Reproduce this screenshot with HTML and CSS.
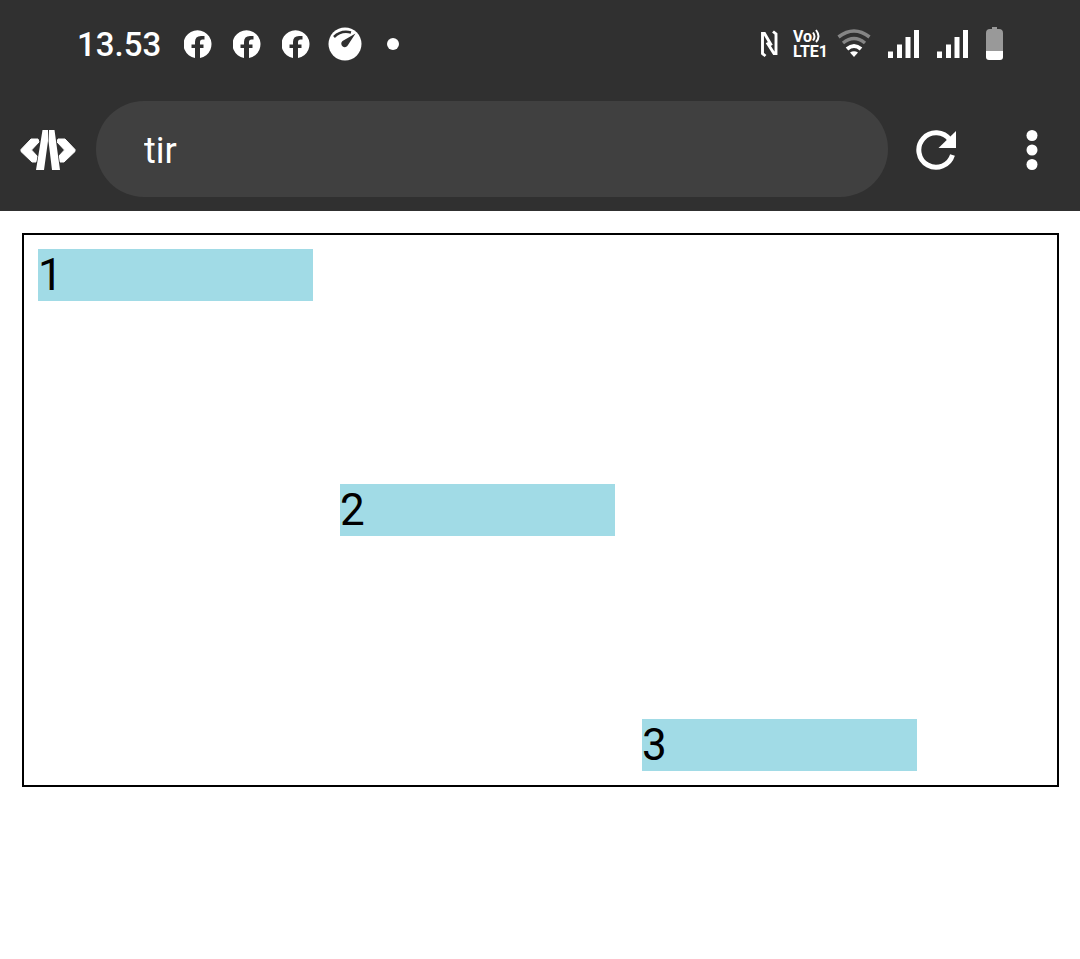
FILE: index.html
```html
<!DOCTYPE html>
<html lang="en">
<head>
<meta charset="utf-8">
<meta name="viewport" content="width=device-width, initial-scale=1">
<title>tir</title>
<link rel="stylesheet" href="styles.css">
</head>
<body>
<svg width="0" height="0" class="defs" aria-hidden="true">
  <symbol id="facebook" viewBox="0 0 28 28">
    <path fill="#fff" d="M11 28A14 14 0 1 1 16 28V18H19.500V14.500H16V12Q16 9.500 18.500 9.500H20.500V6H17Q11 6 11 12V14.500H7.500V18H11Z"/>
  </symbol>
  <symbol id="signal" viewBox="0 0 32 30">
    <path fill="#fff" d="M0 22.500H5V29H0ZM9 15.500H14V29H9ZM17.500 8H22.500V29H17.500ZM26 1H31V29H26Z"/>
  </symbol>
</svg>
<header class="top">
  <div class="status">
    <div class="status-left">
      <time class="clock">13.53</time>
      <svg class="fb" aria-hidden="true"><use href="#facebook"/></svg>
      <svg class="fb" aria-hidden="true"><use href="#facebook"/></svg>
      <svg class="fb" aria-hidden="true"><use href="#facebook"/></svg>
      <svg class="gauge" viewBox="0 0 34 34" aria-hidden="true">
        <circle cx="17" cy="17" r="16.500" fill="#fff"/>
        <path d="M6 10Q13 3 23 5.500" fill="none" stroke="#303030" stroke-width="2.500"/>
        <path d="M27.500 6.500L20 18A3.500 3.500 0 1 1 14.500 14Z" fill="#303030"/>
      </svg>
      <span class="dot"></span>
    </div>
    <div class="status-right">
      <svg class="nfc" viewBox="0 0 18 28" aria-hidden="true">
        <path d="M5.500 26L2.500 23.500V3.500H4.500L11.500 15.500M13 1.500L16 4V23.500H14L7 12.500" fill="none" stroke="#fff" stroke-width="2.900"/>
      </svg>
      <div class="volte">
        <div class="vo">Vo<svg class="waves" viewBox="0 0 9 14" aria-hidden="true">
          <path d="M1 3.500Q4 7.500 1 11.500M4 1Q9 7.500 4 13" fill="none" stroke="#fff" stroke-width="2"/>
        </svg></div>
        <div>LTE1</div>
      </div>
      <svg class="wifi" viewBox="0 0 34 30" aria-hidden="true">
        <g fill="none" stroke-width="3.500">
          <path d="M1.500 8Q17 -4 32.500 8" stroke="#858585"/>
          <path d="M6 14Q17 5 28 14" stroke="#858585"/>
          <path d="M10 20Q17 14 24 20" stroke="#fff" stroke-width="4"/>
        </g>
        <path d="M13 23.500Q17 21 21 23.500L17 28Z" fill="#fff"/>
      </svg>
      <svg class="signal" aria-hidden="true"><use href="#signal"/></svg>
      <svg class="signal" aria-hidden="true"><use href="#signal"/></svg>
      <svg class="battery" viewBox="0 0 17 34" aria-hidden="true">
        <path d="M6 0H11V2H13Q17 2 17 6V24H0V6Q0 2 4 2H6Z" fill="#999"/>
        <path d="M0 24H17V30Q17 33 14 33H3Q0 33 0 30Z" fill="#fff"/>
      </svg>
    </div>
  </div>
  <div class="toolbar">
    <svg class="logo" viewBox="0 0 56 44" aria-hidden="true">
      <path d="M11 11H18L19 14L11.500 22L18 29L16 34H12L1 23.500V21.500ZM45 11H38L37 14L44.500 22L38 29L40 34H44L55 23.500V21.500Z" fill="#fff" stroke="#fff" stroke-linejoin="round"/>
      <path d="M22.500 2H28V13L24 42H16ZM29 2H34.500L40 42H32L28.500 13Z" fill="#fff" stroke="#303030" stroke-width="1.500" paint-order="stroke" stroke-linejoin="round"/>
    </svg>
    <input class="address" type="text" value="tir" aria-label="Address">
    <button class="tool" type="button" aria-label="Reload">
      <svg viewBox="0 0 40 40">
        <path d="M36.500 25A17.200 17.200 0 1 1 34 10" fill="none" stroke="#fff" stroke-width="5"/>
        <path d="M40 1V18H22.500Z" fill="#fff"/>
      </svg>
    </button>
    <button class="tool" type="button" aria-label="Menu">
      <svg viewBox="0 0 40 40" fill="#fff">
        <circle cx="20" cy="5.500" r="5.500"/><circle cx="20" cy="20" r="5.500"/><circle cx="20" cy="34.500" r="5.500"/>
      </svg>
    </button>
  </div>
</header>
<main class="container">
  <div class="item start">1</div>
  <div class="item middle">2</div>
  <div class="item end">3</div>
</main>
</body>
</html>
```
FILE: styles.css
```css
* { box-sizing: border-box; }
body { margin: 0; background: #fff; font-family: Roboto, sans-serif; }
svg { display: block; flex: none; }
.defs { position: absolute; }

.top { background: #303030; color: #fff; }
.status {
  display: flex;
  justify-content: space-between;
  height: 88px;
  padding: 0 77px;
}
.status-left, .status-right { display: flex; align-items: center; }
.status-left { gap: 21px; }
.status-right { gap: 17px; }
.clock { font-size: 33px; font-weight: 500; line-height: 40px; padding: 2px 2px 0 0; }
.fb { width: 28px; height: 28px; }
.gauge { width: 34px; height: 34px; margin-left: -3px; }
.dot { width: 12px; height: 12px; border-radius: 50%; background: #fff; margin-left: 4px; }
.nfc { width: 18px; height: 28px; margin-right: -2px; }
.volte { width: 36px; font-size: 16px; font-weight: 700; line-height: 15px; }
.vo { display: flex; }
.waves { width: 9px; height: 14px; }
.wifi { width: 34px; height: 30px; margin-left: -9px; }
.signal { width: 32px; height: 30px; }
.battery { width: 17px; height: 34px; }

.toolbar { display: flex; align-items: center; padding: 13px 28px 14px 20px; }
.logo { width: 56px; height: 44px; margin: 2px 20px 0 0; }
.address {
  flex: 1;
  min-width: 0;
  height: 96px;
  padding: 4px 48px 0;
  border: 0;
  border-radius: 48px;
  outline: 0;
  background: #404040;
  color: #fff;
  font: 36px Roboto, sans-serif;
}
.tool {
  width: 40px;
  height: 40px;
  padding: 0;
  border: 0;
  background: none;
  margin: 2px 0 0 28px;
}
.tool + .tool { margin-left: 56px; }

.container {
  display: flex;
  gap: 27px;
  min-height: 554px;
  margin: 22px 21px 22px 22px;
  padding: 14px;
  border: 2px solid #000;
}
.item {
  flex: 0 1 275px;
  background: #a1dbe6;
  color: #000;
  font-size: 44px;
  line-height: 52px;
}
.start { align-self: flex-start; }
.middle { align-self: center; }
.end { align-self: flex-end; }
```
